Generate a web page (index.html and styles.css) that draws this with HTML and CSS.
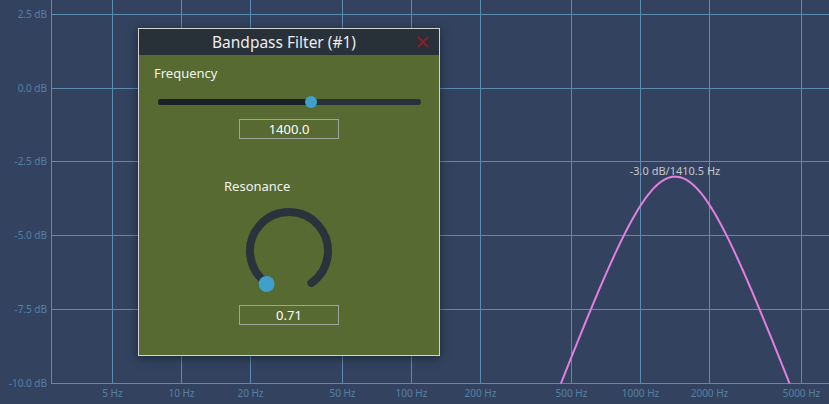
FILE: index.html
```html
<!DOCTYPE html>
<html lang="en">
<head>
<meta charset="utf-8">
<title>Bandpass Filter</title>
<link rel="stylesheet" href="styles.css">
</head>
<body>
<div class="stage">
  <svg class="chart" width="829" height="404" viewBox="0 0 829 404">
    <defs>
      <clipPath id="plot-clip"><rect x="51" y="0" width="778" height="383.5"></rect></clipPath>
    </defs>
    <g class="grid">
      <line x1="112.5" y1="0" x2="112.5" y2="383"></line>
      <line x1="181.5" y1="0" x2="181.5" y2="383"></line>
      <line x1="250.5" y1="0" x2="250.5" y2="383"></line>
      <line x1="342.5" y1="0" x2="342.5" y2="383"></line>
      <line x1="411.5" y1="0" x2="411.5" y2="383"></line>
      <line x1="480.5" y1="0" x2="480.5" y2="383"></line>
      <line x1="571.5" y1="0" x2="571.5" y2="383"></line>
      <line x1="640.5" y1="0" x2="640.5" y2="383"></line>
      <line x1="709.5" y1="0" x2="709.5" y2="383"></line>
      <line x1="801.5" y1="0" x2="801.5" y2="383"></line>
      <line x1="51" y1="14.5" x2="829" y2="14.5"></line>
      <line x1="51" y1="88.5" x2="829" y2="88.5"></line>
      <line x1="51" y1="161.5" x2="829" y2="161.5"></line>
      <line x1="51" y1="235.5" x2="829" y2="235.5"></line>
      <line x1="51" y1="309.5" x2="829" y2="309.5"></line>
      <line x1="51" y1="383.5" x2="829" y2="383.5"></line>
      <line x1="51.5" y1="0" x2="51.5" y2="384"></line>
    </g>
    <g class="y-labels">
      <text x="47" y="15">2.5 dB</text>
      <text x="47" y="89">0.0 dB</text>
      <text x="47" y="162">-2.5 dB</text>
      <text x="47" y="236">-5.0 dB</text>
      <text x="47" y="310">-7.5 dB</text>
      <text x="47" y="384">-10.0 dB</text>
    </g>
    <g class="x-labels">
      <text x="112.5" y="394">5 Hz</text>
      <text x="181.5" y="394">10 Hz</text>
      <text x="250.5" y="394">20 Hz</text>
      <text x="342.5" y="394">50 Hz</text>
      <text x="411.5" y="394">100 Hz</text>
      <text x="480.5" y="394">200 Hz</text>
      <text x="571.5" y="394">500 Hz</text>
      <text x="640.5" y="394">1000 Hz</text>
      <text x="709.5" y="394">2000 Hz</text>
      <text x="801.5" y="394">5000 Hz</text>
    </g>
    <g clip-path="url(#plot-clip)">
      <path id="response" class="response" d=""></path>
    </g>
    <text class="peak-label" x="675" y="172">-3.0 dB/1410.5 Hz</text>
  </svg>

  <section class="dialog">
    <header class="dialog-title">
      <span class="title-spacer"></span>
      <span class="title-text">Bandpass Filter (#1)</span>
      <svg class="close" width="12" height="12" viewBox="0 0 12 12">
        <path d="M1 1 L11 11 M11 1 L1 11"></path>
      </svg>
    </header>
    <div class="dialog-body">
      <div class="field-label freq-label">Frequency</div>
      <div class="slider">
        <div class="track">
          <div class="track-fill" style="width:58.2%"></div>
          <div class="thumb" style="left:58.2%"></div>
        </div>
      </div>
      <div class="value-box">1400.0</div>
      <div class="knob-group">
        <div class="field-label">Resonance</div>
        <svg class="knob" width="96" height="96" viewBox="0 0 96 96">
          <path class="knob-arc" d="M25.6 79.9 A39 39 0 1 1 70.4 79.9"></path>
          <circle class="knob-thumb" cx="25.6" cy="81" r="8"></circle>
        </svg>
      </div>
      <div class="value-box">0.71</div>
    </div>
  </section>
</div>
<script src="script.js"></script>
</body>
</html>
```

FILE: styles.css
```css
html, body {
  margin: 0;
  padding: 0;
}

body {
  width: 829px;
  height: 404px;
  overflow: hidden;
  background: #33435f;
  font-family: "Noto Sans", "Open Sans", sans-serif;
}

.stage {
  position: relative;
  width: 829px;
  height: 404px;
}

.chart {
  display: block;
}

.grid line {
  stroke: #5b8cb0;
  stroke-width: 1;
}

.y-labels text {
  font-family: "Noto Sans", sans-serif;
  font-size: 10px;
  fill: #5481a4;
  text-anchor: end;
  dominant-baseline: middle;
}

.x-labels text {
  font-family: "Noto Sans", sans-serif;
  font-size: 10px;
  fill: #5481a4;
  text-anchor: middle;
  dominant-baseline: middle;
}

.response {
  fill: none;
  stroke: #e27fe0;
  stroke-width: 2;
  stroke-linejoin: round;
}

.peak-label {
  font-family: "Noto Sans", sans-serif;
  font-size: 11px;
  fill: #c3c6cc;
  text-anchor: middle;
  dominant-baseline: middle;
}

.dialog {
  position: absolute;
  left: 138px;
  top: 28px;
  width: 300px;
  height: 326px;
  border: 1px solid #d3d4cf;
  background: #566a31;
  box-shadow: 0 2px 9px rgba(8, 14, 26, 0.55);
  display: flex;
  flex-direction: column;
}

.dialog-title {
  height: 26px;
  background: #283038;
  display: grid;
  grid-template-columns: 1fr auto 1fr;
  align-items: center;
  padding-right: 10px;
}

.title-text {
  color: #ebedee;
  font-size: 15.5px;
  line-height: 26px;
  white-space: nowrap;
}

.close {
  justify-self: end;
  display: block;
}

.close path {
  stroke: #8e1d2a;
  stroke-width: 1.8;
  fill: none;
}

.dialog-body {
  flex: 1;
  display: flex;
  flex-direction: column;
  padding-top: 9px;
}

.field-label {
  color: #f3f3ef;
  font-size: 13px;
  line-height: 18px;
}

.freq-label {
  padding-left: 15px;
}

.slider {
  margin: 13px 18px 0 19px;
  height: 14px;
  display: flex;
  align-items: center;
}

.track {
  position: relative;
  flex: 1;
  height: 6px;
  border-radius: 3px;
  background: #29323a;
}

.track-fill {
  height: 6px;
  border-radius: 3px 0 0 3px;
  background: #1b2227;
}

.thumb {
  position: absolute;
  top: 50%;
  width: 12px;
  height: 12px;
  margin: -6px 0 0 -6px;
  border-radius: 50%;
  background: #3fa1cb;
}

.value-box {
  align-self: center;
  box-sizing: border-box;
  width: 100px;
  height: 20px;
  margin-top: 10px;
  border: 1px solid #9fa49a;
  color: #ffffff;
  font-size: 13px;
  line-height: 18px;
  text-align: center;
}

.knob-group {
  align-self: center;
  width: 130px;
  margin-top: 38px;
  display: flex;
  flex-direction: column;
}

.knob {
  display: block;
  align-self: center;
  margin-top: 8px;
}

.knob-arc {
  fill: none;
  stroke: #29333c;
  stroke-width: 8;
  stroke-linecap: round;
}

.knob-thumb {
  fill: #3fa1cb;
}

.knob-group + .value-box {
  margin-top: 6px;
}
```

FILE: script.js
```js
(function () {
  var Q = 0.71, fc = 1410.5, peak = -3.0;
  function xOf(f) { return 181.5 + 229.7 * Math.log10(f / 10); }
  function yOf(db) { return 14.5 + (2.5 - db) * 29.48; }
  var pts = [];
  for (var i = 0; i <= 240; i++) {
    var lf = Math.log10(250) + (Math.log10(8000) - Math.log10(250)) * i / 240;
    var f = Math.pow(10, lf);
    var w = f / fc;
    var u = w - 1 / w;
    var db = peak - 10 * Math.log10(1 + Q * Q * u * u);
    pts.push(xOf(f).toFixed(2) + ' ' + yOf(db).toFixed(2));
  }
  document.getElementById('response').setAttribute('d', 'M' + pts.join(' L'));
})();
```
